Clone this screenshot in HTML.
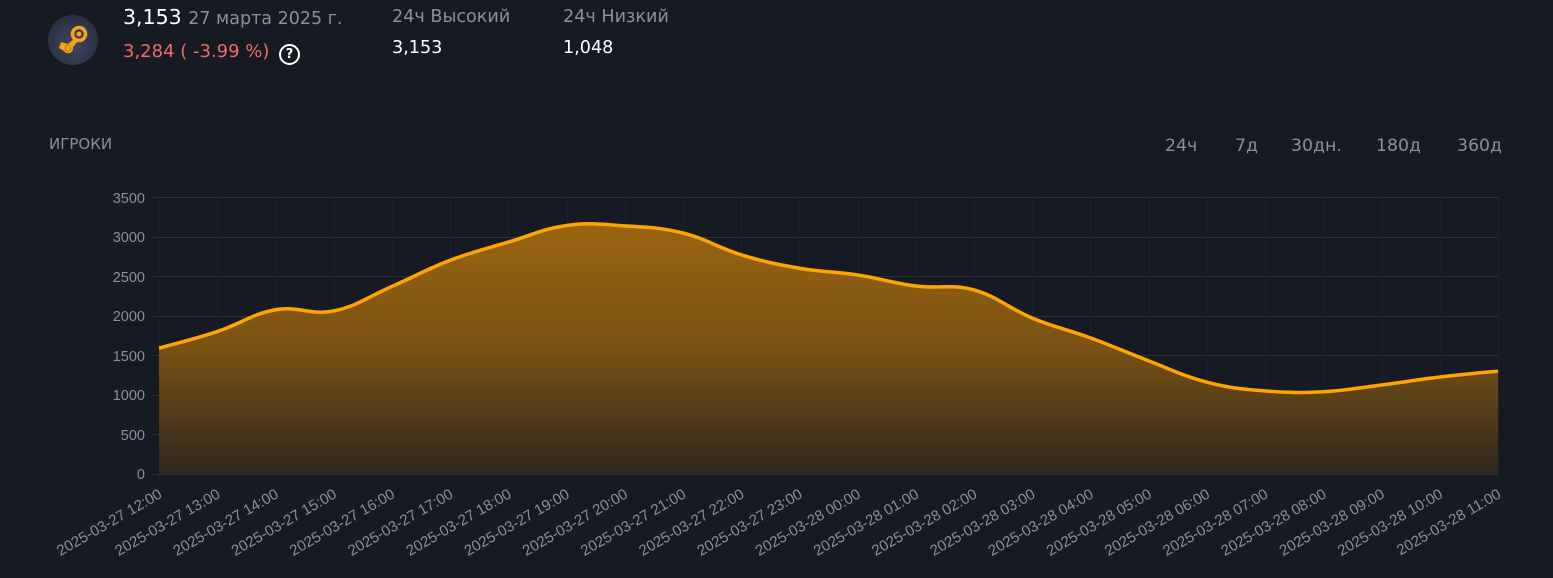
<!DOCTYPE html>
<html><head><meta charset="utf-8">
<style>
html,body{margin:0;padding:0;background:#161a22;width:1553px;height:578px;overflow:hidden;font-family:"DejaVu Sans","Liberation Sans","Noto Sans CJK SC",sans-serif;}
.abs{position:absolute;white-space:nowrap}
</style></head><body>
<div class="abs" style="left:48px;top:15px;width:50px;height:50px;border-radius:50%;background:radial-gradient(circle at 50% 60%,#3d4760,#2a3143 70%);"></div>
<svg class="abs" style="left:48px;top:15px" width="50" height="50" viewBox="0 0 50 50">
<circle cx="31" cy="19" r="6.5" fill="none" stroke="#f7a21b" stroke-width="3.5"/>
<circle cx="31" cy="19" r="2.5" fill="#f7a21b"/>
<path d="M27 23 L20 29 L13 27 L11 33 L16 36 A5 5 0 0 0 25 32 L30 26 Z" fill="#f7a21b"/>
<circle cx="20" cy="33" r="3" fill="none" stroke="#c77a0c" stroke-width="1"/>
</svg>
<div class="abs" style="left:123px;top:5px;font-size:20.5px;color:#fff">3,153 <span style="font-size:17.5px;color:#8b8f97">27 марта 2025 г.</span></div>
<div class="abs" style="left:123px;top:41px;font-size:18px;color:#f06a6a">3,284 ( -3.99 %)</div>
<div class="abs" style="left:279px;top:44px;width:17px;height:17px;border:2px solid #fff;border-radius:50%;color:#fff;font-size:13px;font-weight:bold;text-align:center;line-height:17px">?</div>
<div class="abs" style="left:392px;top:7px;font-size:17.6px;color:#8b8f97">24ч Высокий</div>
<div class="abs" style="left:392px;top:38px;font-size:17.6px;color:#fff">3,153</div>
<div class="abs" style="left:563px;top:7px;font-size:17.6px;color:#8b8f97">24ч Низкий</div>
<div class="abs" style="left:563px;top:38px;font-size:17.6px;color:#fff">1,048</div>
<div class="abs" style="left:49px;top:135px;font-size:15px;color:#8b8f97">ИГРОКИ</div>
<div class="abs" style="left:1165px;top:136px;font-size:17.3px;color:#8b8f97">24ч</div>
<div class="abs" style="left:1235px;top:136px;font-size:17.3px;color:#8b8f97">7д</div>
<div class="abs" style="left:1291px;top:136px;font-size:17.3px;color:#8b8f97">30дн.</div>
<div class="abs" style="left:1376px;top:136px;font-size:17.3px;color:#8b8f97">180д</div>
<div class="abs" style="left:1457px;top:136px;font-size:17.3px;color:#8b8f97">360д</div>
<svg class="abs" style="left:0;top:0;font-family:'Liberation Sans',sans-serif" width="1553" height="578" id="ch">
<defs><linearGradient id="g" gradientUnits="userSpaceOnUse" x1="0" y1="220" x2="0" y2="474">
<stop offset="0" stop-color="#9a6510"/><stop offset="0.5" stop-color="#7a5213"/><stop offset="1" stop-color="#2e281f"/></linearGradient></defs>
<g id="grid" stroke="#2c3038" stroke-width="1"></g>
<g font-size="14.5" fill="#8b8f97" text-anchor="end">
<text x="145" y="203">3500</text><text x="145" y="242">3000</text><text x="145" y="282">2500</text><text x="145" y="321">2000</text><text x="145" y="361">1500</text><text x="145" y="400">1000</text><text x="145" y="440">500</text><text x="145" y="479">0</text>
</g>
<path id="area" fill="url(#g)"/>
<path id="line" fill="none" stroke="#ffa500" stroke-width="3.5"/>
<g id="xl" font-size="15" fill="#8b8f97" text-anchor="end">
<text>2025-03-27 12:00</text><text>2025-03-27 13:00</text><text>2025-03-27 14:00</text><text>2025-03-27 15:00</text><text>2025-03-27 16:00</text><text>2025-03-27 17:00</text><text>2025-03-27 18:00</text><text>2025-03-27 19:00</text><text>2025-03-27 20:00</text><text>2025-03-27 21:00</text><text>2025-03-27 22:00</text><text>2025-03-27 23:00</text><text>2025-03-28 00:00</text><text>2025-03-28 01:00</text><text>2025-03-28 02:00</text><text>2025-03-28 03:00</text><text>2025-03-28 04:00</text><text>2025-03-28 05:00</text><text>2025-03-28 06:00</text><text>2025-03-28 07:00</text><text>2025-03-28 08:00</text><text>2025-03-28 09:00</text><text>2025-03-28 10:00</text><text>2025-03-28 11:00</text>
</g>
</svg>
<script>
var v=[1590,1800,2075,2060,2370,2700,2930,3140,3135,3045,2770,2600,2515,2375,2325,1970,1720,1430,1160,1050,1040,1125,1225,1300];
var x0=159,x1=1498,dx=(x1-x0)/23;
function Y(val){return 474-val*277/3500;}
var P=v.map(function(val,i){return[x0+i*dx,Y(val)];});
var d="M"+P[0][0]+","+P[0][1];
for(var i=0;i<P.length-1;i++){var p0=P[Math.max(i-1,0)],p1=P[i],p2=P[i+1],p3=P[Math.min(i+2,P.length-1)];var t=0.2;
d+=" C"+(p1[0]+(p2[0]-p0[0])*t)+","+(p1[1]+(p2[1]-p0[1])*t)+" "+(p2[0]-(p3[0]-p1[0])*t)+","+(p2[1]-(p3[1]-p1[1])*t)+" "+p2[0]+","+p2[1];}
document.getElementById('line').setAttribute('d',d);
document.getElementById('area').setAttribute('d',d+" L"+x1+",474 L"+x0+",474 Z");
var g=document.getElementById('grid'),s="";
for(var k=0;k<8;k++){var y=Math.round(Y(k*500))+0.5;s+='<line x1="152" x2="1498" y1="'+y+'" y2="'+y+'"/>';}
for(var i=0;i<24;i++){var x=Math.round(x0+i*dx)+0.5;s+='<line stroke="#1d2129" x1="'+x+'" x2="'+x+'" y1="197" y2="480"/>';}
g.innerHTML=s;
var ts=document.querySelectorAll('#xl text');
for(var i=0;i<ts.length;i++){var x=x0+i*dx+4;ts[i].setAttribute('transform','translate('+x+',497) rotate(-30)');}
</script>
</body></html>
